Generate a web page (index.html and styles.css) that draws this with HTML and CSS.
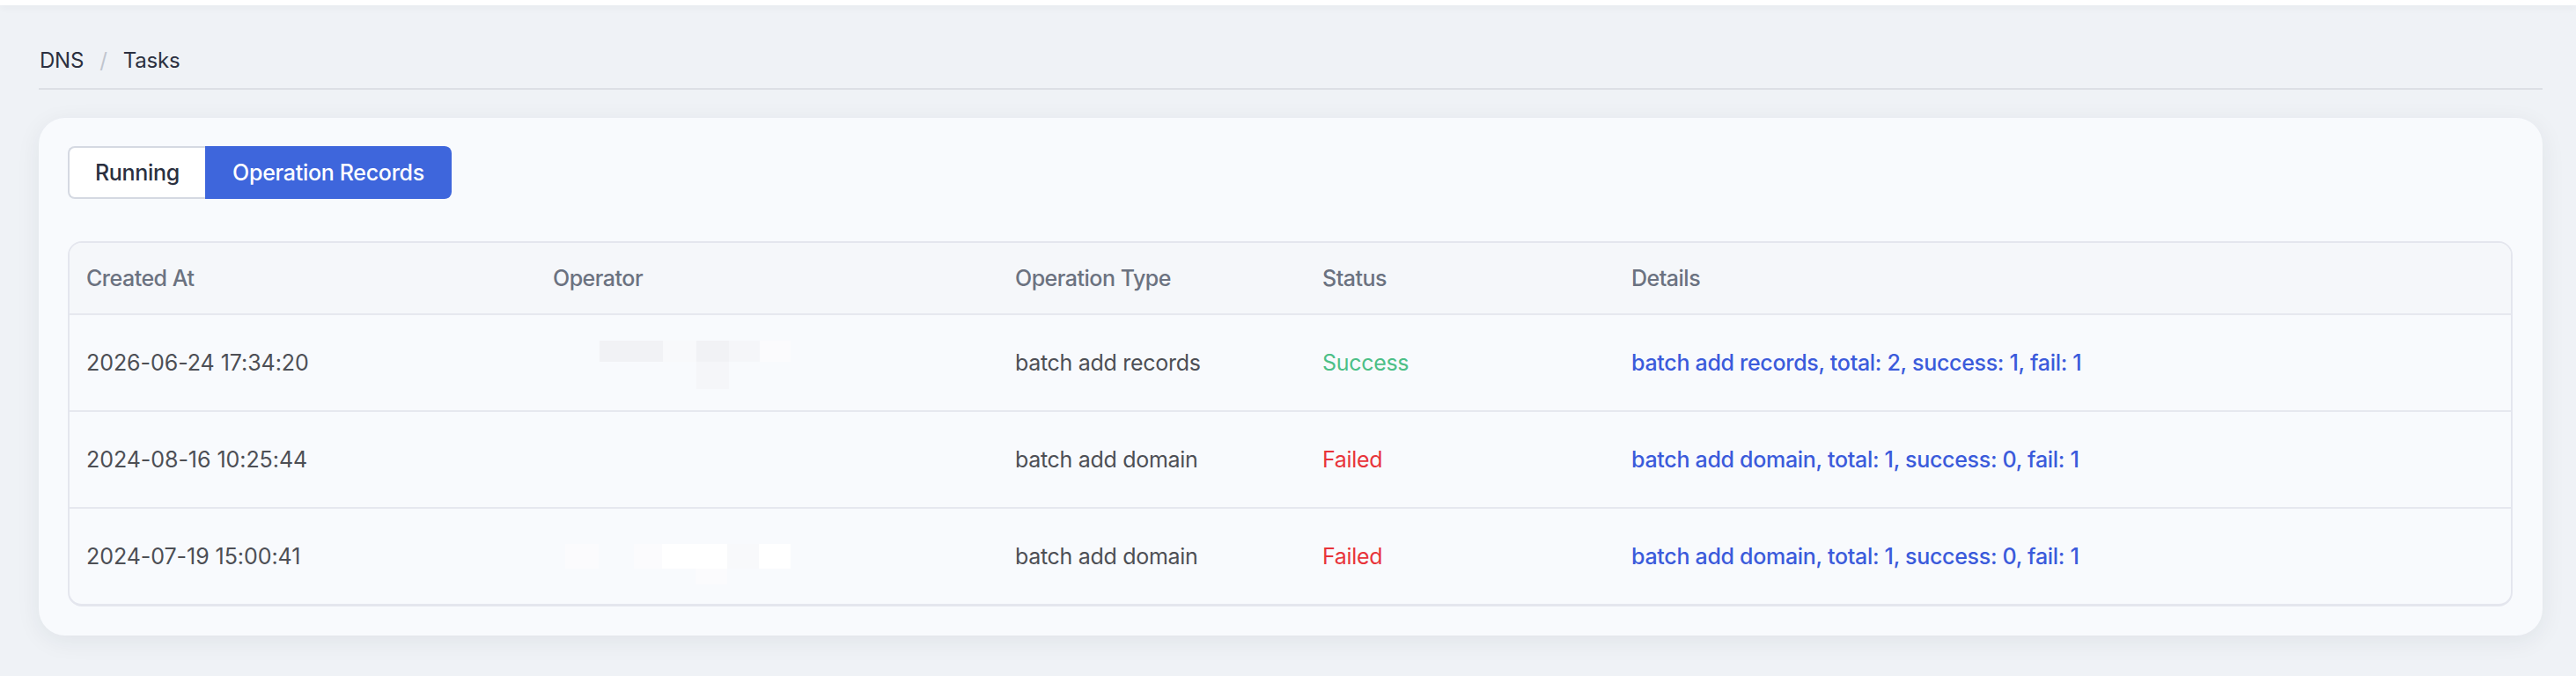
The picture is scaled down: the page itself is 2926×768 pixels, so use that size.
FILE: index.html
```html
<!DOCTYPE html>
<html lang="en">
<head>
    <meta charset="UTF-8">
    <meta name="viewport" content="width=device-width, initial-scale=1.0">
    <title>DNS Tasks</title>
    <link rel="stylesheet" href="styles.css">
</head>
<body>
<div class="topbar"></div>

<main class="page">
    <nav class="crumbs">
        <span class="crumb">DNS</span>
        <span class="sep">/</span>
        <span class="crumb">Tasks</span>
    </nav>

    <section class="card">
        <div class="tabs">
            <button type="button" class="tab">Running</button>
            <button type="button" class="tab active">Operation Records</button>
        </div>

        <div class="table-wrap">
            <table class="records">
                <colgroup>
                    <col class="c-time">
                    <col class="c-op">
                    <col class="c-type">
                    <col class="c-status">
                    <col>
                </colgroup>
                <thead>
                    <tr>
                        <th>Created At</th>
                        <th>Operator</th>
                        <th>Operation Type</th>
                        <th>Status</th>
                        <th>Details</th>
                    </tr>
                </thead>
                <tbody>
                    <tr>
                        <td class="time">2026-06-24 17:34:20</td>
                        <td>
                            <div class="redact redact-1">
                                <i class="g1"></i><i class="g3"></i><i class="g1"></i><i class="g2"></i><i class="g4"></i>
                                <i></i><i></i><i class="g2"></i><i></i><i></i>
                            </div>
                        </td>
                        <td>batch add records</td>
                        <td class="ok">Success</td>
                        <td class="detail">batch add records, total: 2, success: 1, fail: 1</td>
                    </tr>
                    <tr>
                        <td class="time">2024-08-16 10:25:44</td>
                        <td></td>
                        <td>batch add domain</td>
                        <td class="bad">Failed</td>
                        <td class="detail">batch add domain, total: 1, success: 0, fail: 1</td>
                    </tr>
                    <tr>
                        <td class="time">2024-07-19 15:00:41</td>
                        <td>
                            <div class="redact redact-3">
                                <i class="g4"></i><i></i><i class="g4"></i><i class="w"></i><i class="w"></i><i class="g3"></i><i class="w"></i>
                                <i></i><i></i><i></i><i></i><i class="g4"></i><i></i><i></i>
                            </div>
                        </td>
                        <td>batch add domain</td>
                        <td class="bad">Failed</td>
                        <td class="detail">batch add domain, total: 1, success: 0, fail: 1</td>
                    </tr>
                </tbody>
            </table>
        </div>
    </section>
</main>
</body>
</html>
```

FILE: styles.css
```css
body {
    margin: 0;
    padding: 0;
    background: #eff2f6;
    font-family: Inter, "Noto Sans", Arial, sans-serif;
    color: #2b3040;
}

.topbar {
    height: 6px;
    background: #fff;
    box-shadow: 0 2px 10px rgba(0, 0, 0, 0.05);
}

.page {
    padding: 0 38px 45px 44px;
}

/* breadcrumb */
.crumbs {
    display: flex;
    align-items: center;
    gap: 18px;
    padding: 47px 0 15px 1px;
    border-bottom: 2px solid #dcdfe5;
    font-size: 24px;
    line-height: 32px;
    letter-spacing: -0.2px;
}

.crumb {
    color: #2b3040;
}

.sep {
    color: #c0c5ce;
}

/* card */
.card {
    margin-top: 32px;
    padding: 32px 34px 33px 33px;
    background: #f8fafd;
    border-radius: 30px;
    box-shadow: 0 6px 28px rgba(30, 40, 60, 0.07);
}

.tabs {
    display: flex;
}

.tab {
    height: 60px;
    font-family: inherit;
    font-size: 25px;
    font-weight: 500;
    letter-spacing: -0.3px;
    cursor: pointer;
}

.tab:first-child {
    width: 156px;
    background: #fff;
    color: #2b3040;
    border: 2px solid #d5d9e2;
    border-right: none;
    border-radius: 8px 0 0 8px;
}

.tab.active {
    width: 280px;
    background: #3e66dc;
    color: #fff;
    border: none;
    border-radius: 0 8px 8px 0;
}

/* table */
.table-wrap {
    margin-top: 48px;
    border: 2px solid #e4e6ee;
    border-bottom-width: 3px;
    border-radius: 16px;
    overflow: hidden;
}

.records {
    width: 100%;
    border-collapse: collapse;
    table-layout: fixed;
    font-size: 25px;
    letter-spacing: -0.3px;
}

.c-time { width: 530px; }
.c-op { width: 525px; }
.c-type { width: 349px; }
.c-status { width: 351px; }

.records th {
    height: 80px;
    padding: 0 19px;
    background: #f5f7fa;
    color: #6b7280;
    font-weight: 500;
    letter-spacing: -0.5px;
    text-align: left;
    border-bottom: 2px solid #e6e8ef;
}

.records td {
    height: 108px;
    padding: 0 19px;
    color: #4d4f55;
    border-bottom: 2px solid #e6e8ef;
}

.records tr:last-child td {
    border-bottom: none;
}

.records .time {
    letter-spacing: -0.05px;
}

.ok {
    color: #4cbf87 !important;
}

.bad {
    color: #e8333a !important;
}

.detail {
    color: #3b5bdb !important;
    font-weight: 500;
}

/* faint blocks left by the redacted operator names */
.redact {
    display: grid;
}

.redact i {
    display: block;
}

.redact-1 {
    margin: 4px 0 0 53px;
    grid-template-columns: 72px 38px 37px 35px 35px;
    grid-template-rows: 24px 31px;
}

.redact-3 {
    margin: 18px 0 0 14px;
    grid-template-columns: 38px 40px 32px 38px 36px 36px 36px;
    grid-template-rows: 28px 18px;
}

.g1 { background: #f1f2f5; }
.g2 { background: #f5f6f9; }
.g3 { background: #f8f9fb; }
.g4 { background: #fbfbfd; }
.w { background: #ffffff; }
```
